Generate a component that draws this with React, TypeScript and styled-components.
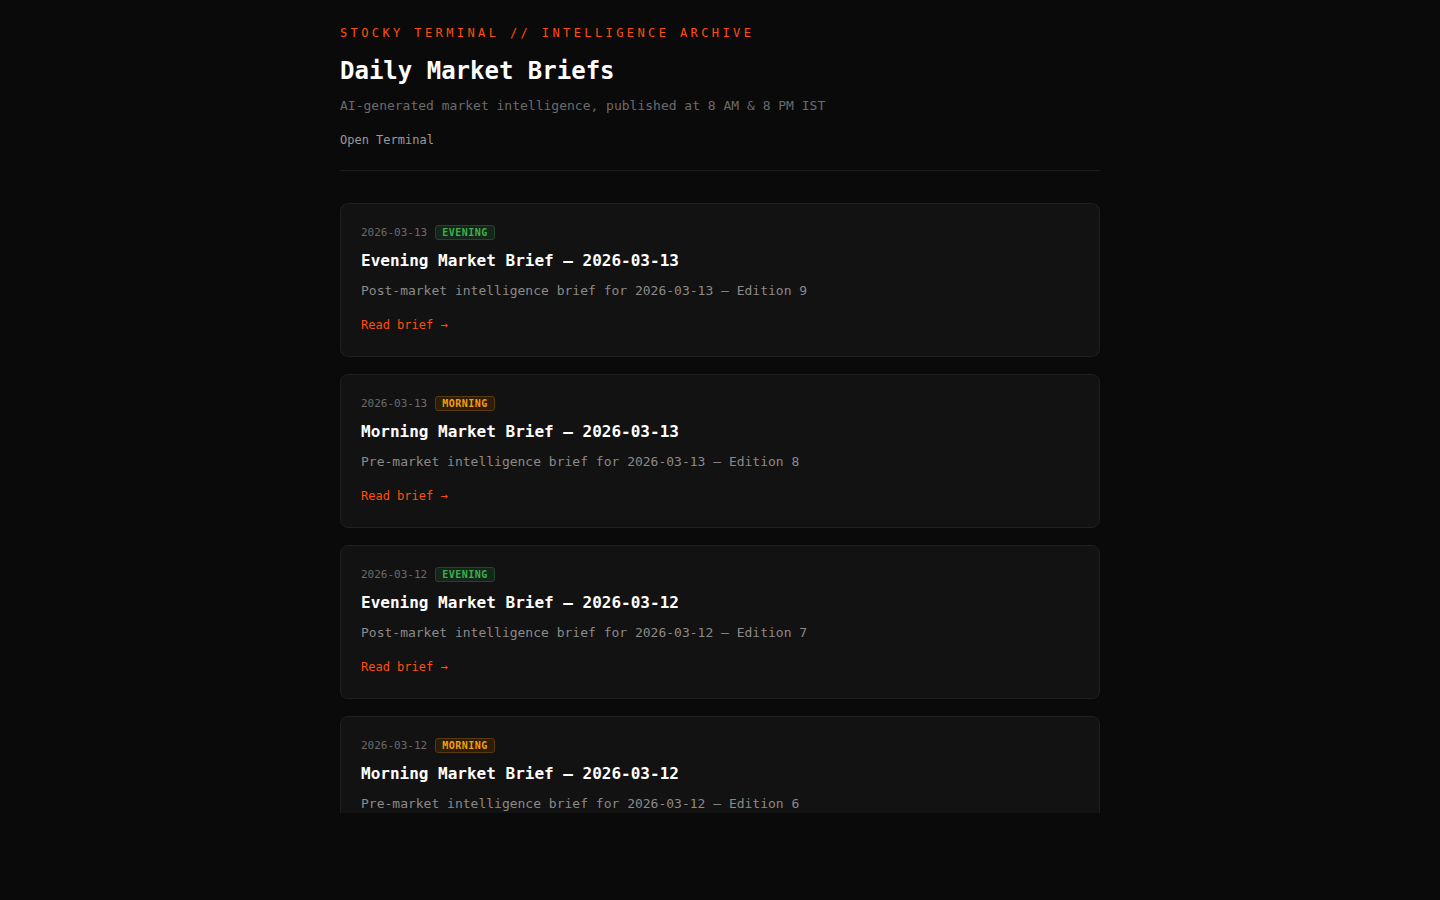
import React from "react";
import styled, { createGlobalStyle } from "styled-components";

const GlobalStyle = createGlobalStyle`
  html, body {
    margin: 0;
    padding: 0;
    background: #0a0a0a;
  }
  body {
    font-family: "DejaVu Sans Mono", "Liberation Mono", monospace;
    color: #e6e6e6;
  }
`;

const Page = styled.div`
  height: 100vh;
  box-sizing: border-box;
  padding: 25px 0 87px;
  display: flex;
  justify-content: center;
  overflow: hidden;
`;

const Column = styled.main`
  width: 760px;
  display: flex;
  flex-direction: column;
`;

const Header = styled.header`
  padding-bottom: 21px;
  border-bottom: 1px solid #1c1c1c;
`;

const Eyebrow = styled.div`
  font-size: 12px;
  line-height: 16px;
  letter-spacing: 3.4px;
  color: #ff4f0a;
  text-transform: uppercase;
`;

const Title = styled.h1`
  margin: 14px 0 0;
  font-size: 24px;
  line-height: 32px;
  font-weight: 700;
  color: #ffffff;
`;

const Subtitle = styled.p`
  margin: 9px 0 0;
  font-size: 13px;
  line-height: 20px;
  color: #6b6b6b;
`;

const TerminalLink = styled.a`
  display: inline-block;
  margin-top: 15px;
  font-size: 12px;
  line-height: 18px;
  color: #9a9a9a;
  text-decoration: none;
`;

const List = styled.section`
  flex: 1;
  min-height: 0;
  overflow: hidden;
  margin-top: 32px;
  display: flex;
  flex-direction: column;
  gap: 17px;
`;

const Card = styled.article`
  flex-shrink: 0;
  background: #121212;
  border: 1px solid #1f1f1f;
  border-radius: 8px;
  padding: 20px 20px 21px;
`;

const Meta = styled.div`
  height: 16px;
  display: flex;
  align-items: center;
  gap: 8px;
`;

const DateText = styled.span`
  font-size: 11px;
  color: #6a6a6a;
`;

const Badge = styled.span<{ $kind: "evening" | "morning" }>`
  font-size: 10px;
  line-height: 13px;
  font-weight: 700;
  letter-spacing: 0.5px;
  padding: 0 6px;
  border-radius: 3px;
  color: ${(p) => (p.$kind === "evening" ? "#3fae4a" : "#f59e0b")};
  background: ${(p) => (p.$kind === "evening" ? "#14261a" : "#2b1d08")};
  border: 1px solid ${(p) => (p.$kind === "evening" ? "#21452a" : "#5a3a0c")};
`;

const CardTitle = styled.h2`
  margin: 9px 0 0;
  font-size: 16px;
  line-height: 24px;
  font-weight: 700;
  color: #ffffff;
`;

const CardDesc = styled.p`
  margin: 8px 0 0;
  font-size: 13px;
  line-height: 20px;
  color: #8a8a8a;
`;

const ReadLink = styled.a`
  display: inline-block;
  margin-top: 14px;
  font-size: 12px;
  line-height: 20px;
  color: #ff4f0a;
  text-decoration: none;
`;

type Brief = {
  date: string;
  kind: "evening" | "morning";
  edition: number;
};

const briefs: Brief[] = [
  { date: "2026-03-13", kind: "evening", edition: 9 },
  { date: "2026-03-13", kind: "morning", edition: 8 },
  { date: "2026-03-12", kind: "evening", edition: 7 },
  { date: "2026-03-12", kind: "morning", edition: 6 },
];

const App: React.FC = (): JSX.Element => {
  return (
    <>
      <GlobalStyle />
      <Page>
        <Column>
          <Header>
            <Eyebrow>Stocky Terminal // Intelligence Archive</Eyebrow>
            <Title>Daily Market Briefs</Title>
            <Subtitle>AI-generated market intelligence, published at 8 AM &amp; 8 PM IST</Subtitle>
            <TerminalLink href="#">Open Terminal</TerminalLink>
          </Header>
          <List>
            {briefs.map((b) => {
              const label = b.kind === "evening" ? "Evening" : "Morning";
              const prefix = b.kind === "evening" ? "Post" : "Pre";
              return (
                <Card key={`${b.date}-${b.kind}`}>
                  <Meta>
                    <DateText>{b.date}</DateText>
                    <Badge $kind={b.kind}>{b.kind.toUpperCase()}</Badge>
                  </Meta>
                  <CardTitle>
                    {label} Market Brief — {b.date}
                  </CardTitle>
                  <CardDesc>
                    {prefix}-market intelligence brief for {b.date} — Edition {b.edition}
                  </CardDesc>
                  <ReadLink href="#">Read brief →</ReadLink>
                </Card>
              );
            })}
          </List>
        </Column>
      </Page>
    </>
  );
};

export default App;
